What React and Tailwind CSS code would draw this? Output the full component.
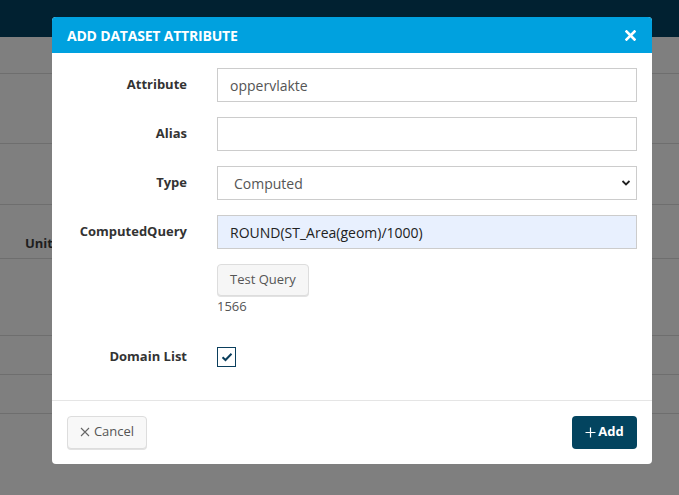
import React from 'react';

const Field = ({ label, children }) => (
  <div className="flex items-center">
    <label className="w-[135px] text-right text-[13px] font-bold text-[#333]">{label}</label>
    <div className="ml-[30px] w-[420px]">{children}</div>
  </div>
);

const App = () => {
  return (
    <div className="relative w-full h-[495px] overflow-hidden bg-[#7f7f7f]" style={{ fontFamily: '"Open Sans", sans-serif' }}>
      {/* page behind the dialog (dimmed) */}
      <div className="h-[37px] bg-[#012131]"></div>
      <div className="h-[37px] border-b border-[#6e6e6e]"></div>
      <div className="h-[70px] border-b border-[#6e6e6e]"></div>
      <div className="h-[61px] border-b border-[#6e6e6e]"></div>
      <div className="h-[54px] border-b border-[#6e6e6e] px-[25px] pt-[29px] text-[13px] font-bold text-[#1e1e1e]">Unit</div>
      <div className="h-[77px] border-b border-[#6e6e6e]"></div>
      <div className="h-[39px] border-b border-[#6e6e6e]"></div>
      <div className="h-[39px] border-b border-[#6e6e6e]"></div>

      {/* dialog */}
      <div className="absolute inset-0 pt-[17px] pl-[52px]">
        <div className="w-[600px] rounded-[4px] bg-white overflow-hidden">
          <div className="h-[36px] bg-[#00a1df] flex items-center justify-between pl-[15px] pr-[16px]">
            <h2 className="text-[14px] font-bold text-white tracking-[-0.2px]">ADD DATASET ATTRIBUTE</h2>
            <svg width="11" height="11" viewBox="0 0 11 11">
              <path d="M1.5 1.5 L9.5 9.5 M9.5 1.5 L1.5 9.5" stroke="white" strokeWidth="2.6" strokeLinecap="square" />
            </svg>
          </div>

          <div className="pt-[15px] pb-[33px] flex flex-col">
            <Field label="Attribute">
              <div className="h-[34px] border border-[#ccc] px-[12px] flex items-center text-[14px] text-[#555]">oppervlakte</div>
            </Field>
            <div className="mt-[15px]">
              <Field label="Alias">
                <div className="h-[34px] border border-[#ccc]"></div>
              </Field>
            </div>
            <div className="mt-[15px]">
              <Field label="Type">
                <div className="h-[34px] border border-[#ccc] pl-[16px] pr-[4px] flex items-center justify-between text-[14px] text-[#555]">
                  <span>Computed</span>
                  <svg width="10" height="8" viewBox="0 0 10 8" className="mr-[1px]">
                    <path d="M1.5 2 L5 5.5 L8.5 2" fill="none" stroke="#222" strokeWidth="1.8" />
                  </svg>
                </div>
              </Field>
            </div>
            <div className="mt-[15px]">
              <Field label="ComputedQuery">
                <div className="h-[34px] border border-[#ccc] bg-[#e8f0fe] px-[12px] flex items-center text-[14px] text-[#222]">ROUND(ST_Area(geom)/1000)</div>
              </Field>
            </div>
            <div className="ml-[165px] mt-[15px]">
              <button className="h-[32px] px-[12px] rounded-[4px] border border-[#ddd] bg-[#f6f6f6] text-[13px] text-[#555] shadow-[0_1px_0_#e2e2e2]">Test Query</button>
              <div className="mt-[1px] text-[13px] text-[#555]">1566</div>
            </div>
            <div className="mt-[30px] flex items-center">
              <label className="w-[135px] text-right text-[13px] font-bold text-[#333]">Domain List</label>
              <div className="ml-[30px] w-[19px] h-[20px] border border-[#0b3f5d] flex items-center justify-center">
                <svg width="12" height="10" viewBox="0 0 12 10">
                  <path d="M1.5 5.2 L4.5 8 L10.5 1.8" fill="none" stroke="#0b3f5d" strokeWidth="2" />
                </svg>
              </div>
            </div>
          </div>

          <div className="border-t border-[#e5e5e5] h-[64px] px-[15px] flex items-center justify-between">
            <button className="h-[33px] w-[80px] rounded-[4px] border border-[#ddd] bg-[#f8f8f8] text-[13px] text-[#555] flex items-center justify-center gap-[4px] shadow-[0_1px_0_#e2e2e2]">
              <svg width="10" height="10" viewBox="0 0 10 10">
                <path d="M1 1 L9 9 M9 1 L1 9" stroke="#666" strokeWidth="1.1" />
              </svg>
              Cancel
            </button>
            <button className="h-[33px] w-[65px] rounded-[4px] bg-[#03445f] text-[13px] font-bold text-white flex items-center justify-center gap-[2px]">
              <svg width="11" height="11" viewBox="0 0 11 11">
                <path d="M5.5 0.5 V10.5 M0.5 5.5 H10.5" stroke="white" strokeWidth="1.2" />
              </svg>
              Add
            </button>
          </div>
        </div>
      </div>
    </div>
  );
};

export default App;
